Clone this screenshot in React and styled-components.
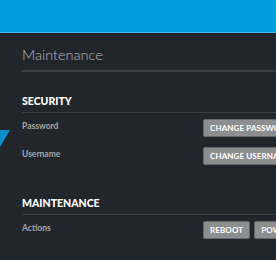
import styled, { createGlobalStyle } from "styled-components"

const Global = createGlobalStyle`
html, body {
  margin: 0;
  padding: 0;
  overflow: hidden;
  background: #21262c;
}
body {
  font-family: Lato, "Open Sans", sans-serif;
}
`

export default function App() {
    return (
        <>
        <Global />
        <Page>
            <Header />
            <Content>
                <Title>Maintenance</Title>
                <Section>
                    <SectionTitle>Security</SectionTitle>
                    <Row>
                        <Label>Password</Label>
                        <Buttons><Button>Change Password</Button></Buttons>
                    </Row>
                    <Row>
                        <Label>Username</Label>
                        <Buttons><Button>Change Username</Button></Buttons>
                    </Row>
                </Section>
                <Section later>
                    <SectionTitle>Maintenance</SectionTitle>
                    <Row>
                        <Label>Actions</Label>
                        <Buttons>
                            <Button>Reboot</Button>
                            <Button>Power Off</Button>
                        </Buttons>
                    </Row>
                </Section>
            </Content>
            <Arrow width="10" height="18" viewBox="0 0 10 18">
                <polygon points="0,0 10,0 0,17" fill="#0d8fcc" />
            </Arrow>
        </Page>
        </>
    )
}

const Page = styled.div`
position: relative;
width: 420px;
height: 260px;
background: #21262c;
`

const Header = styled.div`
height: 32px;
background: #019fdd;
border-bottom: 1px solid #3bb9f0;
`

const Content = styled.div`
padding: 0 0 0 22px;
display: flex;
flex-direction: column;
`

const Title = styled.h1`
margin: 0;
padding-top: 13px;
height: 24px;
font-size: 14.5px;
font-weight: 300;
color: #b6babe;
line-height: 18px;
border-bottom: 2px solid #3a3f45;
`

const Section = styled.div`
display: flex;
flex-direction: column;
gap: 10px;
margin-top: ${props => props.later ? "31px" : "22px"};
`

const SectionTitle = styled.h2`
margin: 0 0 -4px;
font-size: 10.5px;
font-weight: 900;
text-transform: uppercase;
color: #ffffff;
line-height: 14px;
padding-bottom: 4px;
border-bottom: 1px solid #3a3f45;
`

const Row = styled.div`
display: grid;
grid-template-columns: 181px 1fr;
align-items: start;
`

const Label = styled.div`
font-size: 8.5px;
font-weight: 700;
line-height: 10px;
padding-top: 2px;
color: #a2a6aa;
`

const Buttons = styled.div`
display: flex;
gap: 4px;
`

const Button = styled.button`
height: 18px;
padding: 0 6px;
background: #8c8e90;
border: 1px solid #66696c;
border-radius: 2px;
color: #ffffff;
font-family: Lato, sans-serif;
font-size: 8px;
font-weight: 700;
letter-spacing: 0.1px;
text-transform: uppercase;
white-space: nowrap;
`

const Arrow = styled.svg`
position: absolute;
left: 0;
top: 130px;
`
